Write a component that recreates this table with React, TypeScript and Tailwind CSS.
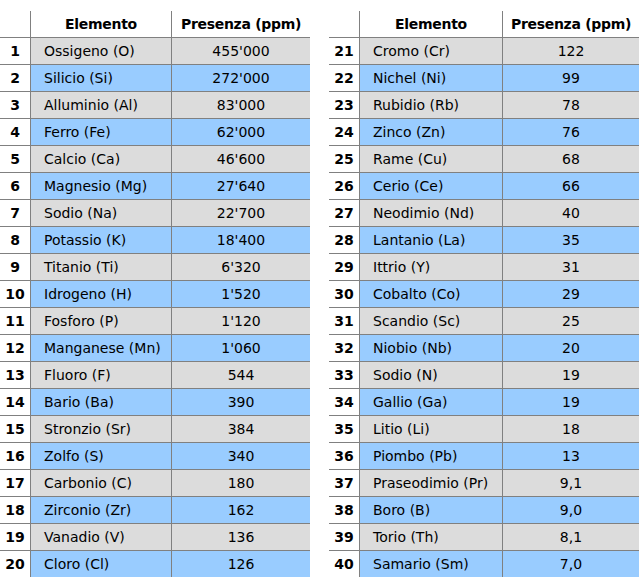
import React from "react";

const left: [number, string, string][] = [
  [1, "Ossigeno (O)", "455'000"],
  [2, "Silicio (Si)", "272'000"],
  [3, "Alluminio (Al)", "83'000"],
  [4, "Ferro (Fe)", "62'000"],
  [5, "Calcio (Ca)", "46'600"],
  [6, "Magnesio (Mg)", "27'640"],
  [7, "Sodio (Na)", "22'700"],
  [8, "Potassio (K)", "18'400"],
  [9, "Titanio (Ti)", "6'320"],
  [10, "Idrogeno (H)", "1'520"],
  [11, "Fosforo (P)", "1'120"],
  [12, "Manganese (Mn)", "1'060"],
  [13, "Fluoro (F)", "544"],
  [14, "Bario (Ba)", "390"],
  [15, "Stronzio (Sr)", "384"],
  [16, "Zolfo (S)", "340"],
  [17, "Carbonio (C)", "180"],
  [18, "Zirconio (Zr)", "162"],
  [19, "Vanadio (V)", "136"],
  [20, "Cloro (Cl)", "126"],
];

const right: [number, string, string][] = [
  [21, "Cromo (Cr)", "122"],
  [22, "Nichel (Ni)", "99"],
  [23, "Rubidio (Rb)", "78"],
  [24, "Zinco (Zn)", "76"],
  [25, "Rame (Cu)", "68"],
  [26, "Cerio (Ce)", "66"],
  [27, "Neodimio (Nd)", "40"],
  [28, "Lantanio (La)", "35"],
  [29, "Ittrio (Y)", "31"],
  [30, "Cobalto (Co)", "29"],
  [31, "Scandio (Sc)", "25"],
  [32, "Niobio (Nb)", "20"],
  [33, "Sodio (N)", "19"],
  [34, "Gallio (Ga)", "19"],
  [35, "Litio (Li)", "18"],
  [36, "Piombo (Pb)", "13"],
  [37, "Praseodimio (Pr)", "9,1"],
  [38, "Boro (B)", "9,0"],
  [39, "Torio (Th)", "8,1"],
  [40, "Samario (Sm)", "7,0"],
];

function Table({ rows, elW, prW }: { rows: [number, string, string][]; elW: string; prW: string }) {
  return (
    <div className="flex w-[310px] flex-col">
      <div className="flex h-[26px]">
        <div className="w-[31px] border-r border-[#808080]" />
        <div className={`${elW} flex items-center justify-center border-r border-[#808080] font-bold tracking-[-0.3px]`}>
          Elemento
        </div>
        <div className={`${prW} flex items-center justify-center font-bold tracking-[-0.3px]`}>Presenza (ppm)</div>
      </div>
      {rows.map(([n, name, val], i) => {
        const bg = i % 2 === 0 ? "bg-[#dcdcdc]" : "bg-[#99ccff]";
        return (
          <div key={n} className="flex h-[27px] border-t border-[#808080]">
            <div className="flex w-[31px] items-center justify-center border-r border-[#808080] font-bold">
              {n}
            </div>
            <div className={`${elW} ${bg} flex items-center border-r border-[#808080] pl-[13px]`}>{name}</div>
            <div className={`${prW} ${bg} flex items-center justify-center`}>{val}</div>
          </div>
        );
      })}
    </div>
  );
}

export default function App() {
  return (
    <div
      className="flex h-[583px] w-[639px] bg-white pt-[11px] text-[14px] leading-[17px] text-[#000]"
      style={{ fontFamily: "'DejaVu Sans', sans-serif" }}
    >
      <Table rows={left} elW="w-[141px]" prW="w-[138px]" />
      <div className="w-[19px]" />
      <Table rows={right} elW="w-[143px]" prW="w-[136px]" />
    </div>
  );
}
